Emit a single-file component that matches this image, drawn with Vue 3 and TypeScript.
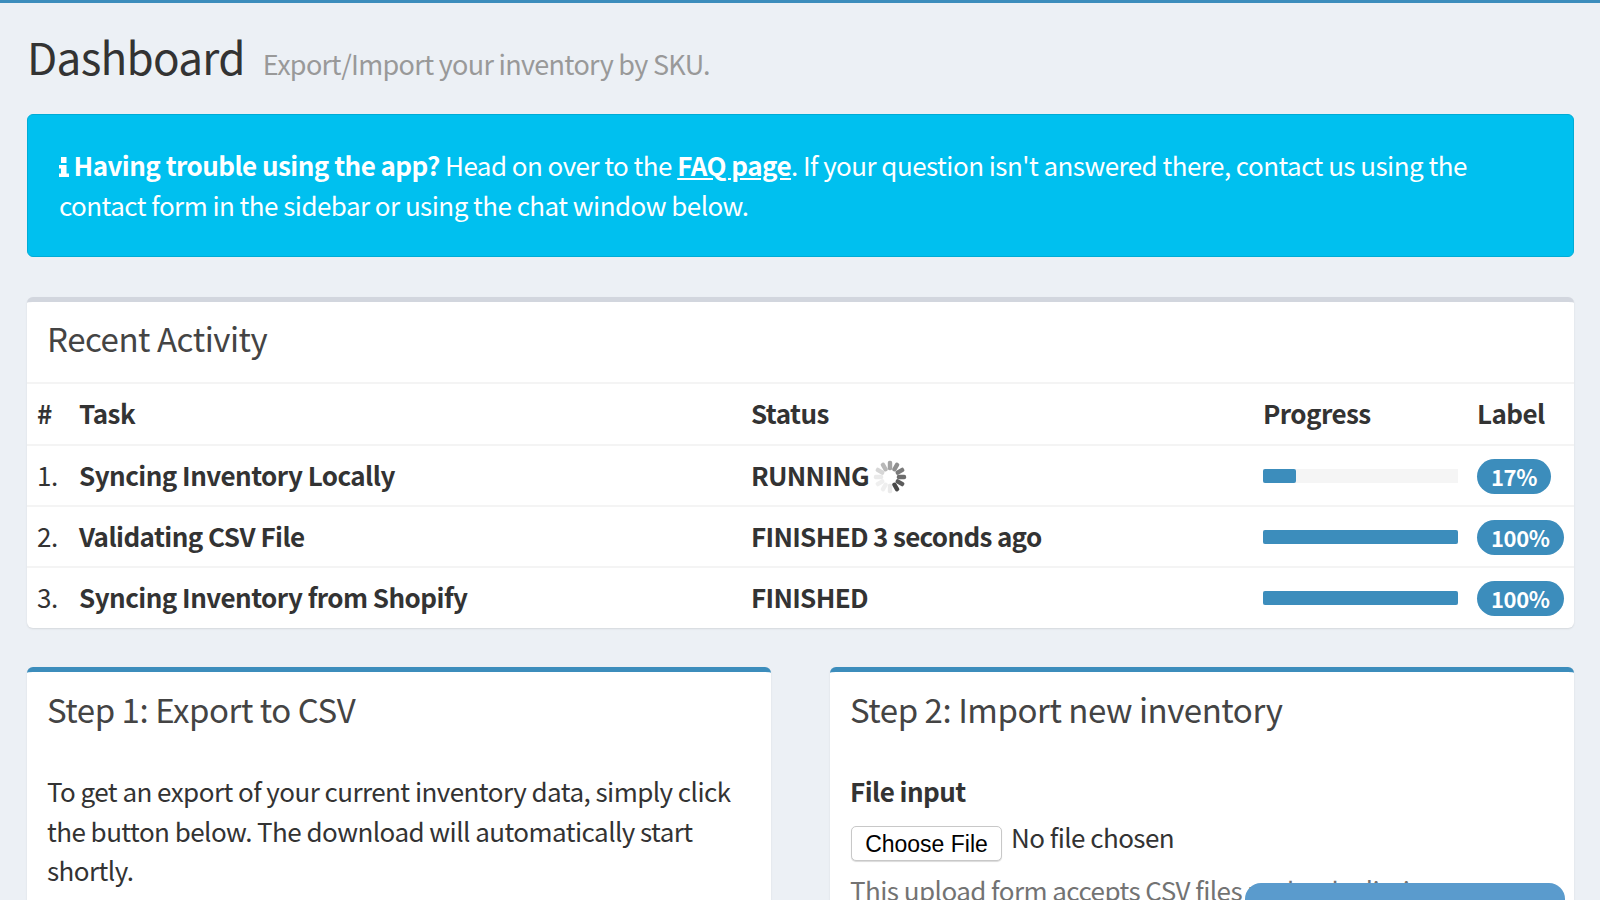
<script setup lang="ts">
interface Row { n: number; task: string; status: string; running: boolean; pct: number }
const rows: Row[] = [
  { n: 1, task: 'Syncing Inventory Locally', status: 'RUNNING', running: true, pct: 17 },
  { n: 2, task: 'Validating CSV File', status: 'FINISHED 3 seconds ago', running: false, pct: 100 },
  { n: 3, task: 'Syncing Inventory from Shopify', status: 'FINISHED', running: false, pct: 100 },
]
const opacities = [0.45, 0.55, 0.65, 0.72, 0.8, 0.9, 0.1, 0.08, 0.08, 0.1, 0.2, 0.35]
</script>

<template>
  <div class="page">
    <header class="head">
      <h1>Dashboard</h1>
      <small>Export/Import your inventory by SKU.</small>
    </header>

    <div class="alert">
      <svg class="info" viewBox="0 0 10 20" aria-hidden="true">
        <path d="M2 0h5.5v6H2zM0 8h7.5v8.5H10V20H0v-3.5h2v-5H0z" fill="#fff" />
      </svg>
      <b>Having trouble using the app?</b> Head on over to the <a href="#">FAQ page</a>. If your question isn't answered there, contact us using the contact form in the sidebar or using the chat window below.
    </div>

    <section class="box activity">
      <h3 class="title">Recent Activity</h3>
      <table>
        <thead>
          <tr><th class="c-n">#</th><th class="c-task">Task</th><th class="c-status">Status</th><th class="c-prog">Progress</th><th class="c-label">Label</th></tr>
        </thead>
        <tbody>
          <tr v-for="r in rows" :key="r.n">
            <td class="c-n">{{ r.n }}.</td>
            <td class="strong">{{ r.task }}</td>
            <td class="strong status">
              {{ r.status }}
              <svg v-if="r.running" class="spin" viewBox="-20 -20 40 40" aria-hidden="true">
                <rect v-for="(o, i) in opacities" :key="i" x="-2.6" y="-19" width="5.2" height="11" rx="2.2" fill="#333" :opacity="o" :transform="`rotate(${i * 30})`" />
              </svg>
            </td>
            <td><div class="bar"><div class="fill" :style="{ width: r.pct + '%' }"></div></div></td>
            <td><span class="pill">{{ r.pct }}%</span></td>
          </tr>
        </tbody>
      </table>
    </section>

    <div class="steps">
      <section class="box step">
        <h3 class="title">Step 1: Export to CSV</h3>
        <p class="body">To get an export of your current inventory data, simply click the button below. The download will automatically start shortly.</p>
      </section>
      <section class="box step">
        <h3 class="title">Step 2: Import new inventory</h3>
        <div class="body">
          <label>File input</label>
          <div class="file"><span class="choose">Choose File</span><span class="none">No file chosen</span></div>
          <p class="help">This upload form accepts CSV files under the limit.</p>
        </div>
      </section>
    </div>

    <div class="chat"></div>
  </div>
</template>

<style>
html, body { margin: 0; height: 900px; overflow: hidden; background: #ecf0f5; }
</style>

<style scoped>
.page {
  box-sizing: border-box;
  height: 900px;
  overflow: hidden;
  border-top: 3px solid #3c8dbc;
  padding: 0 26px 0 27px;
  background: #ecf0f5;
  color: #333;
  font-family: "Noto Sans CJK SC", "Source Sans Pro", "Liberation Sans", sans-serif;
  font-size: 26px;
  letter-spacing: -0.55px;
  line-height: 39.5px;
}
.head { display: flex; align-items: baseline; gap: 18px; height: 111px; padding-top: 23px; box-sizing: border-box; }
h1 { margin: 0; font-size: 44px; font-weight: 400; line-height: 60px; letter-spacing: -0.7px; }
small { font-size: 27px; letter-spacing: -0.7px; color: #999; }
.alert {
  box-sizing: border-box;
  height: 143px;
  padding: 30px 30px 30px 31px;
  border: 1px solid #00acd6;
  border-radius: 6px;
  background: #00c0ef;
  color: #fff;
}
.info { display: inline-block; width: 10px; height: 20px; margin-right: 4.5px; vertical-align: -1px; }
.alert a { color: #fff; font-weight: 700; text-decoration: underline; }
.box {
  box-sizing: border-box;
  background: #fff;
  border-top: 5px solid #d2d6de;
  border-radius: 6px;
  box-shadow: 0 1px 2px rgba(0, 0, 0, .1);
}
.activity { margin-top: 40px; height: 331px; }
.title { margin: 0; padding: 15px 20px 0; font-size: 33px; font-weight: 400; line-height: 44px; letter-spacing: -0.45px; color: #444; }
.activity .title { height: 82px; padding-top: 14px; box-sizing: border-box; border-bottom: 2px solid #f4f4f4; }
table { width: 100%; border-collapse: collapse; table-layout: fixed; }
th, td { padding: 0 10px 2px; height: 61px; text-align: left; border-top: 2px solid #f4f4f4; vertical-align: middle; box-sizing: border-box; white-space: nowrap; }
thead th { border-top: 0; font-weight: 700; }
.c-n { width: 42px; }
.c-task { width: 672px; }
.c-status { width: 512px; }
.c-prog { width: 214px; }
.strong { font-weight: 700; }
.status { letter-spacing: -0.68px; }
.bar { width: 195px; height: 14px; margin-top: 2px; background: #f5f5f5; }
.fill { height: 100%; background: #3c8dbc; border-radius: 2px; }
.pill {
  display: inline-block;
  padding: 0 14px;
  height: 35px;
  margin-bottom: 2px;
  line-height: 35px;
  border-radius: 18px;
  background: #3c8dbc;
  color: #fff;
  font-size: 22px;
  font-weight: 700;
  letter-spacing: -0.4px;
  vertical-align: middle;
}
.spin { width: 34px; height: 34px; vertical-align: -2.5px; margin: -6px 0 -6px -1px; filter: blur(.5px); }
.steps { display: grid; grid-template-columns: 744px 744px; justify-content: space-between; margin-top: 39px; }
.step { border-top-color: #3c8dbc; height: 320px; }
.step .title { padding-top: 15px; }
.body { margin: 0; padding: 40px 20px 0; }
label { display: block; font-weight: 700; }
.file { display: flex; align-items: flex-start; gap: 9px; margin-top: 4px; }
.none { margin-top: 2px; }
.choose {
  box-sizing: border-box;
  width: 151px;
  height: 35px;
  margin: 11px 0 0 1px;
  border: 1px solid #c8c8c8;
  border-radius: 5px;
  background: #fff;
  box-shadow: 0 1px 1px rgba(0, 0, 0, .15);
  color: #000;
  font-family: "Liberation Sans", Arial, sans-serif;
  font-size: 23px;
  letter-spacing: 0;
  line-height: 34px;
  text-align: center;
}
.help { margin: 9px 0 0; color: #737373; }
.chat {
  position: fixed;
  left: 1245px;
  top: 883px;
  width: 320px;
  height: 30px;
  border-radius: 16px 16px 0 0;
  background: #5a9bcd;
}
</style>
